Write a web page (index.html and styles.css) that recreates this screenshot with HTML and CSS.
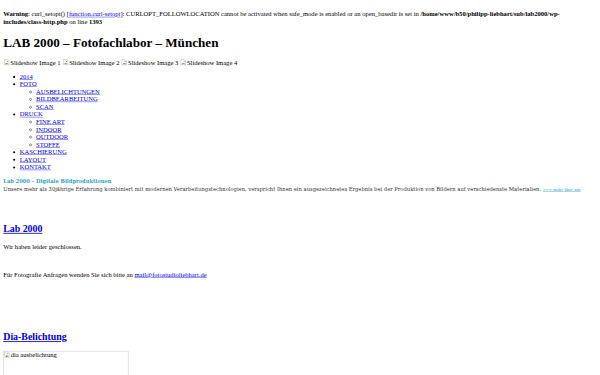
FILE: index.html
```html
<!DOCTYPE html>
<html lang="de">
<head>
<meta charset="utf-8">
<title>LAB 2000 – Fotofachlabor – München</title>
<link rel="stylesheet" href="styles.css">
</head>
<body>
<div class="page">
<br>
<b>Warning</b>: curl_setopt() [<a href="#">function.curl-setopt</a>]: CURLOPT_FOLLOWLOCATION cannot be activated when safe_mode is enabled or an open_basedir is set in <b>/home/www/b50/philipp-liebhart/sub/lab2000/wp-includes/class-http.php</b> on line <b>1393</b><br>
<h1 class="site-title">LAB 2000 – Fotofachlabor – München</h1>
<div class="slideshow">
<span class="broken"><svg class="bicon" viewBox="0 0 16 16"><path d="M2.5 1.5h8l3 3v10h-11z" fill="#fff" stroke="#9a9a9a"/><path d="M4 13l3-4 2 2 1.5-1.5L12 13z" fill="#5a9e3a"/><circle cx="10" cy="6" r="1.3" fill="#3b7fd0"/></svg>Slideshow Image 1</span>
<span class="broken"><svg class="bicon" viewBox="0 0 16 16"><path d="M2.5 1.5h8l3 3v10h-11z" fill="#fff" stroke="#9a9a9a"/><path d="M4 13l3-4 2 2 1.5-1.5L12 13z" fill="#5a9e3a"/><circle cx="10" cy="6" r="1.3" fill="#3b7fd0"/></svg>Slideshow Image 2</span>
<span class="broken"><svg class="bicon" viewBox="0 0 16 16"><path d="M2.5 1.5h8l3 3v10h-11z" fill="#fff" stroke="#9a9a9a"/><path d="M4 13l3-4 2 2 1.5-1.5L12 13z" fill="#5a9e3a"/><circle cx="10" cy="6" r="1.3" fill="#3b7fd0"/></svg>Slideshow Image 3</span>
<span class="broken"><svg class="bicon" viewBox="0 0 16 16"><path d="M2.5 1.5h8l3 3v10h-11z" fill="#fff" stroke="#9a9a9a"/><path d="M4 13l3-4 2 2 1.5-1.5L12 13z" fill="#5a9e3a"/><circle cx="10" cy="6" r="1.3" fill="#3b7fd0"/></svg>Slideshow Image 4</span>
</div>
<ul class="menu">
<li><a href="#">2014</a></li>
<li><a href="#">FOTO</a>
<ul>
<li><a href="#">AUSBELICHTUNGEN</a></li>
<li><a href="#">BILDBEARBEITUNG</a></li>
<li><a href="#">SCAN</a></li>
</ul></li>
<li><a href="#">DRUCK</a>
<ul>
<li><a href="#">FINE ART</a></li>
<li><a href="#">INDOOR</a></li>
<li><a href="#">OUTDOOR</a></li>
<li><a href="#">STOFFE</a></li>
</ul></li>
<li><a href="#">KASCHIERUNG</a></li>
<li><a href="#">LAYOUT</a></li>
<li><a href="#">KONTAKT</a></li>
</ul>
<div class="intro">
<h3 class="intro-title">Lab 2000 – Digitale Bildproduktionen</h3>
<p class="intro-text">Unsere mehr als 30jährige Erfahrung kombiniert mit modernen Verarbeitungstechnologien, verspricht Ihnen ein ausgezeichnetes Ergebnis bei der Produktion von Bildern auf verschiedenste Materialien. <a class="more" href="#">&gt;&gt;&gt; mehr über uns</a></p>
</div>
<div class="post first">
<h2><a href="#">Lab 2000</a></h2>
<p>Wir haben leider geschlossen.</p>
<p>&nbsp;</p>
<p>Für Fotografie Anfragen wenden Sie sich bitte an <a href="#">mail@fotostudioliebhart.de</a></p>
</div>
<div class="post second">
<h2><a href="#">Dia-Belichtung</a></h2>
<div class="broken-box"><span class="broken"><svg class="bicon" viewBox="0 0 16 16"><path d="M2.5 1.5h8l3 3v10h-11z" fill="#fff" stroke="#9a9a9a"/><path d="M4 13l3-4 2 2 1.5-1.5L12 13z" fill="#5a9e3a"/><circle cx="10" cy="6" r="1.3" fill="#3b7fd0"/></svg>dia ausbelichtung</span></div>
</div>
</div>
</body>
</html>
```
FILE: styles.css
```css
html,
body {
  margin: 0;
  padding: 0;
  background: #fff;
}
body {
  overflow: hidden;
}
.page {
  width: 1463px;
  box-sizing: border-box;
  padding: 8px;
  transform: scale(0.41);
  transform-origin: 0 0;
  font-family: "Liberation Serif", "Times New Roman", serif;
  font-size: 16px;
  line-height: 18.4px;
  color: #000;
}
a {
  color: #0000ee;
}
.site-title {
  font-size: 32px;
  line-height: 36.8px;
  margin: 21.44px 0;
}
.slideshow {
  line-height: 19px;
}
.bicon {
  width: 16px;
  height: 16px;
  vertical-align: -2px;
  margin-right: 1px;
}
.menu {
  margin: 16px 0;
  padding-left: 40px;
}
.menu ul {
  padding-left: 40px;
  margin: 0;
}
.intro-title {
  font-family: "DejaVu Serif", serif;
  font-size: 12.5px;
  font-weight: bold;
  color: #2aa3c6;
  margin: 0;
  line-height: 20px;
}
.intro-text {
  font-family: "DejaVu Serif", serif;
  font-size: 12.7px;
  color: #333;
  margin: 0;
  line-height: 17px;
}
.more {
  color: #2aa3c6;
  font-size: 9px;
}
.post h2 {
  font-size: 24px;
  line-height: 27.6px;
  margin: 19.92px 0;
}
.post.first {
  margin-top: 73px;
}
.post.second {
  margin-top: 129px;
}
.broken-box {
  margin-top: 14px;
  width: 303px;
  height: 60px;
  border: 1px solid #c0c0c0;
}
```
